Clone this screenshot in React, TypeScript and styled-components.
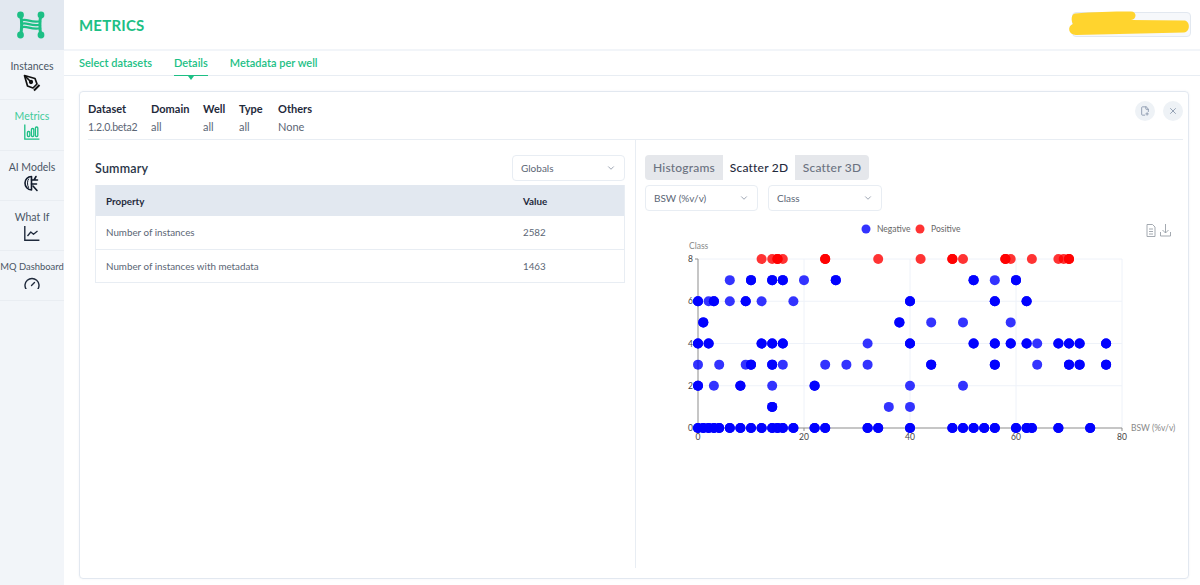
import React from "react";
import styled, { createGlobalStyle } from "styled-components";
import { ChevronDown, X as CloseIcon, FilePlus2 } from "lucide-react";

const Global = createGlobalStyle`
  html, body { margin: 0; padding: 0; height: 100%; background: #fff; overflow: hidden; }
  #root { height: 585px; }
  * { box-sizing: border-box; }
  body { font-family: "Lato", "Noto Sans", sans-serif; color: #5b6675; }
`;

const green = "#1dbf85";

const Page = styled.div`
  display: flex;
  width: 1200px;
  height: 585px;
`;
const Sidebar = styled.aside`
  width: 64px;
  background: #f2f5f9;
  flex: none;
  display: flex;
  flex-direction: column;
`;
const LogoBox = styled.div`
  height: 50px;
  flex: none;
  background: #e2e8f0;
  display: flex;
  align-items: center;
  justify-content: center;
  padding-right: 2px;
`;
const NavItem = styled.div`
  height: 50.3px;
  flex: none;
  border-bottom: 1px solid #e9edf2;
  display: flex;
  flex-direction: column;
  align-items: center;
  padding-top: 9px;
  overflow: hidden;
  svg { display: block; flex: none; }
`;
const NavLabel = styled.span<{ $active?: boolean; $small?: boolean }>`
  font-size: ${(p) => (p.$small ? "9.4px" : "10.5px")};
  line-height: 14px;
  white-space: nowrap;
  color: ${(p) => (p.$active ? "#3fcb99" : "#4a5565")};
  margin-bottom: 1px;
`;
const Main = styled.main`
  flex: 1;
  min-width: 0;
  display: flex;
  flex-direction: column;
`;
const Header = styled.header`
  height: 51px;
  flex: none;
  border-bottom: 2px solid #f2f5f9;
  padding: 0 9px 1px 15px;
  display: flex;
  align-items: center;
  justify-content: space-between;
`;
const Title = styled.h1`
  margin: 2px 0 0;
  font-size: 15px;
  font-weight: 700;
  letter-spacing: 0.2px;
  color: ${green};
`;
const UserBox = styled.div`
  position: relative;
  width: 119px;
  height: 25px;
  border: 1px solid #e2e8f0;
  border-radius: 4px;
  background: #f6f8fb;
`;
const Scribble = styled.svg`
  position: absolute;
  left: -6px;
  top: -3px;
`;
const Tabs = styled.nav`
  height: 25px;
  flex: none;
  padding-left: 15px;
  display: flex;
  gap: 22px;
  border-bottom: 1px solid #e8edf3;
`;
const Tab = styled.div<{ $active?: boolean }>`
  position: relative;
  height: 25px;
  font-size: 11px;
  font-weight: 600;
  line-height: 24px;
  color: ${green};
  border-bottom: ${(p) => (p.$active ? `1px solid ${green}` : "none")};
  ${(p) =>
    p.$active
      ? `&::after { content: ""; position: absolute; left: 50%; margin-left: -3px; top: 25px; border: 3px solid transparent; border-top: 4px solid ${green}; border-bottom: 0; }`
      : ""}
`;
const Content = styled.div`
  flex: 1;
  min-height: 0;
  padding: 15px 11px 6px 15px;
`;
const Card = styled.section`
  height: 488px;
  border: 1px solid #e2e8f0;
  border-radius: 4px;
  padding: 8px 5px 10px 8px;
  display: flex;
  flex-direction: column;
  box-shadow: 0 0 2px rgba(226, 232, 240, 0.6);
`;
const InfoRow = styled.div`
  height: 40px;
  flex: none;
  display: flex;
  justify-content: space-between;
  border-bottom: 1px solid #e8edf3;
`;
const InfoCols = styled.div`
  display: flex;
`;
const InfoCol = styled.div<{ $w: number }>`
  width: ${(p) => p.$w}px;
`;
const InfoHead = styled.div`
  font-size: 11px;
  font-weight: 700;
  line-height: 18px;
  color: #1f2a3c;
`;
const InfoVal = styled.div<{ $tight?: boolean }>`
  line-height: 18px;
  letter-spacing: ${(p) => (p.$tight ? "-0.25px" : "0")};
  font-size: ${(p) => (p.$tight ? "10.5px" : "11px")};
  color: #5b6675;
`;
const Actions = styled.div`
  display: flex;
  gap: 8px;
  padding: 1px 0 0;
`;
const RoundBtn = styled.div`
  width: 20px;
  height: 20px;
  border-radius: 50%;
  background: #eef2f6;
  color: #8493a8;
  display: flex;
  align-items: center;
  justify-content: center;
`;
const Split = styled.div`
  flex: 1;
  min-height: 0;
  display: grid;
  grid-template-columns: 548px 1fr;
`;
const Left = styled.div`
  border-right: 1px solid #e8edf3;
  padding: 15px 10px 0 7px;
`;
const SummaryHead = styled.div`
  height: 26px;
  display: flex;
  align-items: center;
  justify-content: space-between;
  margin-bottom: 4px;
`;
const SummaryTitle = styled.h2`
  margin: 0;
  font-size: 12.5px;
  font-weight: 600;
  letter-spacing: 0.2px;
  color: #2a3547;
`;
const SelectBox = styled.div<{ $w: number }>`
  width: ${(p) => p.$w}px;
  height: 26px;
  border: 1px solid #e8edf3;
  border-radius: 4px;
  padding: 0 8px;
  display: flex;
  align-items: center;
  justify-content: space-between;
  font-size: 10px;
  color: #5b6675;
  background: #fff;
  svg { color: #8a94a3; }
`;
const TableWrap = styled.div`
  border: 1px solid #e8edf3;
  border-top: none;
  font-size: 9.8px;
`;
const Row = styled.div<{ $head?: boolean }>`
  display: grid;
  grid-template-columns: 417px 1fr;
  padding-left: 10px;
  align-items: center;
  height: ${(p) => (p.$head ? "31px" : "33px")};
  background: ${(p) => (p.$head ? "#e2e8f0" : "#fff")};
  color: ${(p) => (p.$head ? "#1f2a3c" : "#5b6675")};
  font-weight: ${(p) => (p.$head ? 700 : 400)};
  &:nth-child(2) { padding-bottom: 2px; }
  &:nth-child(3) { border-top: 1px solid #e8edf3; }
`;
const Right = styled.div`
  padding: 15px 0 0 9px;
`;
const ChartTabs = styled.div`
  display: inline-flex;
  height: 25px;
  background: #e5e7eb;
  border-radius: 4px;
  overflow: hidden;
`;
const ChartTab = styled.div<{ $active?: boolean; $w: number }>`
  width: ${(p) => p.$w}px;
  text-align: center;
  line-height: 25px;
  font-size: 12px;
  letter-spacing: 0.2px;
  font-weight: 500;
  background: ${(p) => (p.$active ? "#fff" : "transparent")};
  color: ${(p) => (p.$active ? "#1f2a3c" : "#6b7280")};
`;
const Filters = styled.div`
  display: flex;
  gap: 10px;
  margin-top: 5px;
`;
const ChartSvg = styled.svg`
  display: block;
  margin: 5px 0 0 0;
`;

type Pt = [number, number, boolean];

const px = (v: number) => 53 + v * 5.3;
const py = (v: number) => 212 - v * 21.125;

// [class, single values, doubled (darker) values]
const rows: [number, number[], number[]][] = [
  [8, [12, 14, 16, 34, 42, 50, 59, 63, 68, 69], [15, 24, 48, 58, 70]],
  [7, [6, 20, 56], [10, 14, 16, 26, 52, 60]],
  [6, [2, 6, 12, 18], [0, 3, 9, 40, 56, 62]],
  [5, [44, 50, 59], [1, 38]],
  [4, [32, 64], [0, 2, 12, 14, 16, 40, 52, 56, 59, 62, 68, 70, 72, 77]],
  [3, [0, 4, 9, 16, 24, 28, 32, 64], [10, 14, 44, 56, 70, 72, 77]],
  [2, [3, 14, 40, 50], [0, 8, 22]],
  [1, [36, 40], [14]],
  [0, [], [0, 1, 2, 3, 4, 6, 8, 10, 12, 14, 15, 16, 18, 22, 24, 32, 34, 40, 48, 50, 52, 54, 56, 60, 62, 63, 68, 74]],
];

const points: Pt[] = rows.flatMap(([c, singles, doubles]) => {
  const list: Pt[] = [];
  singles.forEach((v) => list.push([v, c, false]));
  doubles.forEach((v) => list.push([v, c, true]));
  return list;
});

const Scatter = () => {
  const xTicks = [0, 20, 40, 60, 80];
  const yTicks = [0, 2, 4, 6, 8];
  return (
    <ChartSvg width="540" height="240" viewBox="0 0 540 240" fontFamily="Lato, 'Noto Sans', sans-serif">
      <circle cx="221" cy="13" r="4.5" fill="#0000ff" opacity="0.8" />
      <text x="232" y="16" fontSize="8.5" fill="#666">Negative</text>
      <circle cx="275" cy="13" r="4.5" fill="#ff0000" opacity="0.8" />
      <text x="286" y="16" fontSize="8.5" fill="#666">Positive</text>
      <g transform="translate(501 8)" stroke="#9aa0a8" fill="none" strokeWidth="0.9">
        <path d="M1 .5h5.500L9 3v9.500H1z" />
        <path d="M3 5h4M3 7.500h4M3 10h4" />
      </g>
      <g transform="translate(515 8)" stroke="#9aa0a8" fill="none" strokeWidth="0.9">
        <path d="M.5 8v4h10V8" />
        <path d="M5.500 0v9M2.500 6l3 3 3-3" />
      </g>
      <text x="44" y="33" fontSize="8.5" fill="#888">Class</text>
      {yTicks.slice(1).map((t) => (
        <line key={t} x1={px(0)} x2={px(80)} y1={py(t)} y2={py(t)} stroke="#eef2f9" strokeWidth="1" />
      ))}
      {xTicks.slice(1).map((t) => (
        <line key={t} x1={px(t)} x2={px(t)} y1={py(8)} y2={py(0)} stroke="#eef2f9" strokeWidth="1" />
      ))}
      <line x1={px(0)} x2={px(0)} y1={py(8)} y2={py(0)} stroke="#8d8d8d" />
      <line x1={px(0)} x2={px(80)} y1={py(0)} y2={py(0)} stroke="#8d8d8d" />
      {yTicks.map((t) => (
        <g key={t}>
          <line x1={px(0) - 3} x2={px(0)} y1={py(t)} y2={py(t)} stroke="#8d8d8d" />
          <text x={px(0) - 5} y={py(t) + 3} fontSize="8.5" fill="#444" textAnchor="end">{t}</text>
        </g>
      ))}
      {xTicks.map((t) => (
        <g key={t}>
          <line x1={px(t)} x2={px(t)} y1={py(0)} y2={py(0) + 3} stroke="#8d8d8d" />
          <text x={px(t)} y={py(0) + 12} fontSize="8.5" fill="#444" textAnchor="middle">{t}</text>
        </g>
      ))}
      <text x="486" y="215" fontSize="8.5" fill="#888">BSW (%v/v)</text>
      {points.map(([v, c, dbl], i) => (
        <g key={i} fill={c === 8 ? "#ff0000" : "#0000ff"}>
          <circle cx={px(v)} cy={py(c)} r="5" opacity="0.8" />
          {dbl && <circle cx={px(v)} cy={py(c)} r="5" opacity="0.8" />}
          {dbl && <circle cx={px(v)} cy={py(c)} r="5" opacity="0.8" />}
        </g>
      ))}
    </ChartSvg>
  );
};

const Logo = () => (
  <svg width="28" height="30" viewBox="0 0 28 30" fill="none" stroke="#1dbf85">
    <path d="M3.500 5c1.500 5 1.500 15 0 20M24 5c-1.500 5-1.500 15 0 20" strokeWidth="3" strokeLinecap="round" />
    <circle cx="3.500" cy="5" r="3.400" fill="#1dbf85" stroke="none" />
    <circle cx="24" cy="5" r="3.400" fill="#1dbf85" stroke="none" />
    <circle cx="3.500" cy="25" r="3.400" fill="#1dbf85" stroke="none" />
    <circle cx="24" cy="25" r="3.400" fill="#1dbf85" stroke="none" />
    <path d="M4 10.500c6-2.500 10 3 20 .5M4 14c6-2.500 10 3 20 .5M4 17.500c6-2.500 10 3 20 .5" strokeWidth="2.300" />
  </svg>
);

const PenIcon = () => (
  <svg width="18" height="18" viewBox="0 0 18 18" fill="none" stroke="#111" strokeWidth="1.700" strokeLinejoin="round">
    <path d="M1.500 1.500l10.500 3 2 5.500-4 4-5.500-2z" />
    <path d="M1.500 1.500l5.500 5.500" />
    <circle cx="8" cy="8" r="1.300" fill="#111" />
    <path d="M11 16.500l5.500-5.500" strokeWidth="2" />
  </svg>
);
const BarsIcon = () => (
  <svg width="16" height="16" viewBox="0 0 16 16" fill="none" stroke="#1dbf85" strokeWidth="1.300">
    <path d="M.8 .5v14.700h14.600" />
    <rect x="3.400" y="7.500" width="2.400" height="5" rx="1" />
    <rect x="7.400" y="4.500" width="2.400" height="8" rx="1.100" />
    <rect x="11.400" y="3" width="2.400" height="9.500" rx="1.100" />
  </svg>
);
const ModelIcon = () => (
  <svg width="16" height="17" viewBox="0 0 16 17" fill="none" stroke="#111a2b" strokeWidth="1.600" strokeLinecap="round" strokeLinejoin="round">
    <path d="M7.500 1.500C3.500 1.500 1 4.500 1 8s2.500 7 6.500 7z" />
    <path d="M4.500 4C3.200 5.500 3 10 4.500 12.500" strokeWidth="1" />
    <path d="M7.500 5h6M7.500 9h5M9 11l4 4.500M10 5l2-3.500" />
  </svg>
);
const LineIcon = () => (
  <svg width="16" height="16" viewBox="0 0 16 16" fill="none" stroke="#1f2a3c" strokeWidth="1.400">
    <path d="M.8 1v14.200h14.600" />
    <path d="M3.500 11l3.300-4 2.700 2.300 4-3.300" strokeWidth="1.300" strokeLinejoin="round" />
  </svg>
);
const GaugeIcon = () => (
  <svg width="16" height="14" viewBox="0 -2 16 14" fill="none" stroke="#1f2a3c" strokeWidth="1.400" strokeLinecap="round">
    <path d="M2.300 12.500A7 7 0 1 1 13.700 12.500" />
    <path d="M7.500 8.500l3-3" />
  </svg>
);

export default function App() {
  return (
    <Page>
      <Global />
      <Sidebar>
        <LogoBox><Logo /></LogoBox>
        <NavItem><NavLabel>Instances</NavLabel><PenIcon /></NavItem>
        <NavItem><NavLabel $active>Metrics</NavLabel><BarsIcon /></NavItem>
        <NavItem><NavLabel>AI Models</NavLabel><ModelIcon /></NavItem>
        <NavItem><NavLabel>What If</NavLabel><LineIcon /></NavItem>
        <NavItem><NavLabel $small>MQ Dashboard</NavLabel><GaugeIcon /></NavItem>
      </Sidebar>
      <Main>
        <Header>
          <Title>METRICS</Title>
          <UserBox>
            <Scribble width="125" height="28" viewBox="0 0 125 28">
              <path
                d="M8 3.500C25 2 45 1.500 64 1.500c6 0 6 8 0 8.500L117 10.500c6 0 7 11 0 12l-108 2.500c-8 0-9-9-3-11-2-3-2-10 2-10.500z"
                fill="#ffd42e"
              />
            </Scribble>
          </UserBox>
        </Header>
        <Tabs>
          <Tab>Select datasets</Tab>
          <Tab $active>Details</Tab>
          <Tab>Metadata per well</Tab>
        </Tabs>
        <Content>
          <Card>
            <InfoRow>
              <InfoCols>
                <InfoCol $w={63}><InfoHead>Dataset</InfoHead><InfoVal $tight>1.2.0.beta2</InfoVal></InfoCol>
                <InfoCol $w={52}><InfoHead>Domain</InfoHead><InfoVal>all</InfoVal></InfoCol>
                <InfoCol $w={36}><InfoHead>Well</InfoHead><InfoVal>all</InfoVal></InfoCol>
                <InfoCol $w={39}><InfoHead>Type</InfoHead><InfoVal>all</InfoVal></InfoCol>
                <InfoCol $w={50}><InfoHead>Others</InfoHead><InfoVal>None</InfoVal></InfoCol>
              </InfoCols>
              <Actions>
                <RoundBtn><FilePlus2 size={10} /></RoundBtn>
                <RoundBtn><CloseIcon size={10} /></RoundBtn>
              </Actions>
            </InfoRow>
            <Split>
              <Left>
                <SummaryHead>
                  <SummaryTitle>Summary</SummaryTitle>
                  <SelectBox $w={113}>Globals<ChevronDown size={10} /></SelectBox>
                </SummaryHead>
                <TableWrap>
                  <Row $head><span>Property</span><span>Value</span></Row>
                  <Row><span>Number of instances</span><span>2582</span></Row>
                  <Row><span>Number of instances with metadata</span><span>1463</span></Row>
                </TableWrap>
              </Left>
              <Right>
                <ChartTabs>
                  <ChartTab $w={78}>Histograms</ChartTab>
                  <ChartTab $w={72} $active>Scatter 2D</ChartTab>
                  <ChartTab $w={74}>Scatter 3D</ChartTab>
                </ChartTabs>
                <Filters>
                  <SelectBox $w={113}>BSW (%v/v)<ChevronDown size={10} /></SelectBox>
                  <SelectBox $w={114}>Class<ChevronDown size={10} /></SelectBox>
                </Filters>
                <Scatter />
              </Right>
            </Split>
          </Card>
        </Content>
      </Main>
    </Page>
  );
}
